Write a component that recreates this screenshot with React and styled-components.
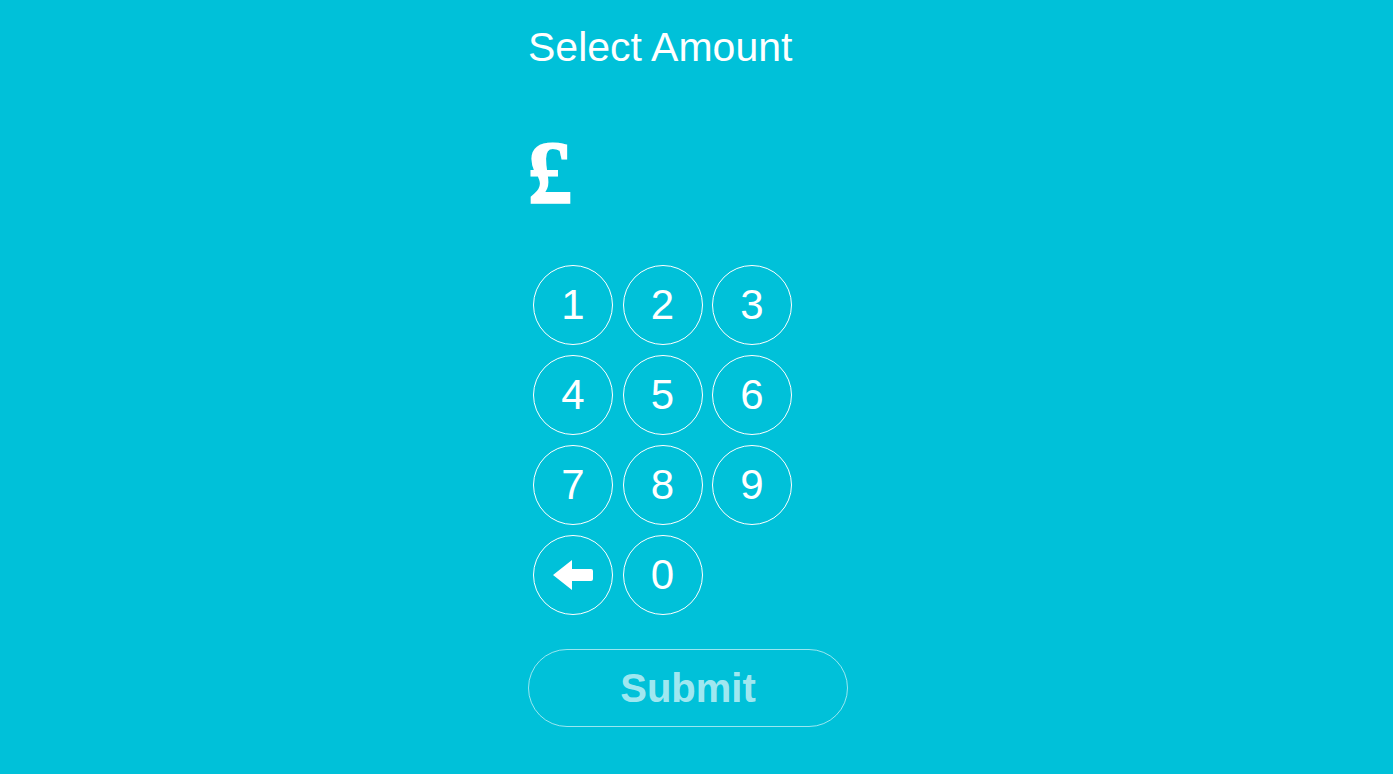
import React from "react";
import styled, { createGlobalStyle } from "styled-components";

const Global = createGlobalStyle`
  html, body { margin: 0; padding: 0; background: #00c1d9; }
  body { font-family: "Liberation Sans", Arial, Helvetica, sans-serif; color: #fff; }
`;

const Page = styled.div`
  min-height: 774px;
  background: #00c1d9;
  padding-top: 23px;
  box-sizing: border-box;
`;

const Column = styled.div`
  width: 337px;
  margin: 0 auto;
  display: flex;
  flex-direction: column;
  align-items: flex-start;
`;

const Title = styled.h1`
  margin: 0;
  font-size: 41px;
  line-height: 48px;
  font-weight: 400;
  color: #fff;
`;

const Amount = styled.div`
  margin-top: 54px;
  margin-bottom: 3px;
  font-family: "Liberation Serif", "Times New Roman", serif;
  font-weight: 700;
  font-size: 88px;
  line-height: 96px;
  height: 96px;
  color: #fff;
  -webkit-text-stroke: 2px #fff;
`;

const Keypad = styled.div`
  margin-top: 41px;
  padding-left: 5px;
  display: grid;
  grid-template-columns: repeat(3, 80px);
  grid-auto-rows: 80px;
  column-gap: 9.5px;
  row-gap: 10px;
`;

const Key = styled.button`
  width: 80px;
  height: 80px;
  border-radius: 50%;
  border: 1px solid #fff;
  background: transparent;
  color: #fff;
  font-family: "Liberation Sans", Arial, Helvetica, sans-serif;
  font-size: 42px;
  line-height: 1;
  padding: 0;
  display: flex;
  align-items: center;
  justify-content: center;
  box-sizing: border-box;
  cursor: pointer;
`;

const Submit = styled.button`
  margin-top: 34px;
  width: 320px;
  height: 78px;
  border-radius: 39px;
  border: 1px solid rgba(255, 255, 255, 0.6);
  background: transparent;
  color: rgba(255, 255, 255, 0.65);
  font-family: "Liberation Sans", Arial, Helvetica, sans-serif;
  font-weight: 700;
  font-size: 40px;
  box-sizing: border-box;
  padding: 0;
  cursor: pointer;
`;

const BackArrow = () => (
  <svg width="40" height="32" viewBox="0 0 40 32" aria-hidden="true">
    <path
      d="M0 16 L19 1 L19 10 L38 10 Q40 10 40 12 L40 20 Q40 22 38 22 L19 22 L19 31 Z"
      fill="#fff"
    />
  </svg>
);

const keys = ["1", "2", "3", "4", "5", "6", "7", "8", "9"];

export default function App() {
  return (
    <Page>
      <Global />
      <Column>
        <Title>Select Amount</Title>
        <Amount>£</Amount>
        <Keypad>
          {keys.map((k) => (
            <Key key={k}>{k}</Key>
          ))}
          <Key aria-label="Delete">
            <BackArrow />
          </Key>
          <Key>0</Key>
        </Keypad>
        <Submit>Submit</Submit>
      </Column>
    </Page>
  );
}
